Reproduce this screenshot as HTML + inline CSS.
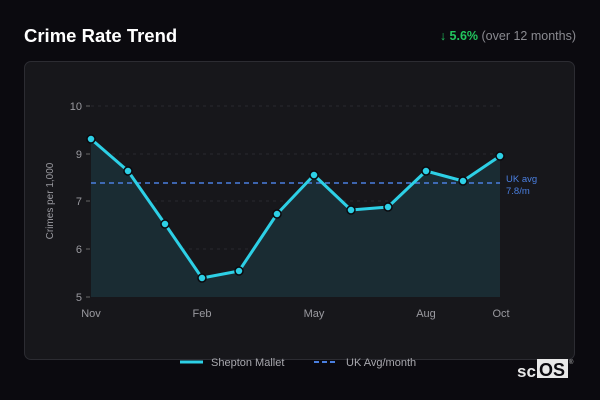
<!DOCTYPE html>
<html><head><meta charset="utf-8"><style>
html,body{margin:0;padding:0;background:#0b0a0f;width:600px;height:400px;overflow:hidden;font-family:"Liberation Sans",sans-serif;}
.t{position:absolute;left:24px;top:25px;color:#fff;font-weight:bold;font-size:18.5px;}
.r{position:absolute;right:24px;top:29px;font-size:12.5px;color:#8a8a90;font-family:"Liberation Sans",sans-serif;}
.r b{color:#22c55e;}
.card{position:absolute;left:24px;top:61px;width:551px;height:299px;background:#17171b;border:1px solid #2c2c32;border-radius:7px;box-sizing:border-box;}
</style></head><body>
<div class="t">Crime Rate Trend</div>
<div class="r"><b>↓ 5.6%</b> (over 12 months)</div>
<div class="card"></div>
<svg width="600" height="400" style="position:absolute;left:0;top:0" font-family="Liberation Sans, sans-serif">
<g stroke="#2a2a2f" stroke-dasharray="3,4" stroke-width="1">
<line x1="91" y1="106" x2="500" y2="106"/><line x1="91" y1="154" x2="500" y2="154"/><line x1="91" y1="201" x2="500" y2="201"/><line x1="91" y1="249" x2="500" y2="249"/>
</g>
<g stroke="#666" stroke-width="1"><line x1="86" y1="106" x2="90" y2="106"/><line x1="86" y1="154" x2="90" y2="154"/><line x1="86" y1="201" x2="90" y2="201"/><line x1="86" y1="249" x2="90" y2="249"/><line x1="86" y1="297" x2="90" y2="297"/></g>
<g fill="#9a9aa0" font-size="11" text-anchor="end"><text x="82" y="110">10</text><text x="82" y="158">9</text><text x="82" y="205">7</text><text x="82" y="253">6</text><text x="82" y="301">5</text></g>
<text transform="translate(53,201) rotate(-90)" fill="#9a9aa0" font-size="10" text-anchor="middle">Crimes per 1,000</text>
<g fill="#9a9aa0" font-size="11" text-anchor="middle"><text x="91" y="317">Nov</text><text x="202" y="317">Feb</text><text x="314" y="317">May</text><text x="426" y="317">Aug</text><text x="501" y="317">Oct</text></g>
<polygon fill="#1a2c33" points="91,297 91,139 128,171 165,224 202,278 239,271 277,214 314,175 351,210 388,207 426,171 463,181 500,156 500,297"/>
<line x1="91" y1="183" x2="500" y2="183" stroke="#4a7fe0" stroke-width="1.5" stroke-dasharray="5,4"/>
<polyline fill="none" stroke="#2dd0e6" stroke-width="3" stroke-linejoin="round" points="91,139 128,171 165,224 202,278 239,271 277,214 314,175 351,210 388,207 426,171 463,181 500,156"/>
<g fill="#2dd0e6" stroke="#0b0a0f" stroke-width="1.5">
<circle cx="91" cy="139" r="4"/><circle cx="128" cy="171" r="4"/><circle cx="165" cy="224" r="4"/><circle cx="202" cy="278" r="4"/><circle cx="239" cy="271" r="4"/><circle cx="277" cy="214" r="4"/><circle cx="314" cy="175" r="4"/><circle cx="351" cy="210" r="4"/><circle cx="388" cy="207" r="4"/><circle cx="426" cy="171" r="4"/><circle cx="463" cy="181" r="4"/><circle cx="500" cy="156" r="4"/>
</g>
<g fill="#4a7fe0" font-size="9.5"><text x="506" y="182">UK avg</text><text x="506" y="194">7.8/m</text></g>
<line x1="180" y1="362" x2="203" y2="362" stroke="#2dd0e6" stroke-width="3"/>
<text x="211" y="366" fill="#a8a8ae" font-size="11">Shepton Mallet</text>
<line x1="314" y1="362" x2="338" y2="362" stroke="#4a7fe0" stroke-width="2" stroke-dasharray="5,3"/>
<text x="346" y="366" fill="#a8a8ae" font-size="11">UK Avg/month</text>
<text x="517" y="377" fill="#e8e8e8" font-size="17" font-weight="bold">sc</text>
<rect x="537" y="359" width="31" height="19" fill="#e8e8e8"/>
<text x="539" y="376" fill="#0b0a0f" font-size="18" font-weight="bold">OS</text>
<text x="569" y="364" fill="#bbb" font-size="6">®</text>
</svg>
</body></html>
